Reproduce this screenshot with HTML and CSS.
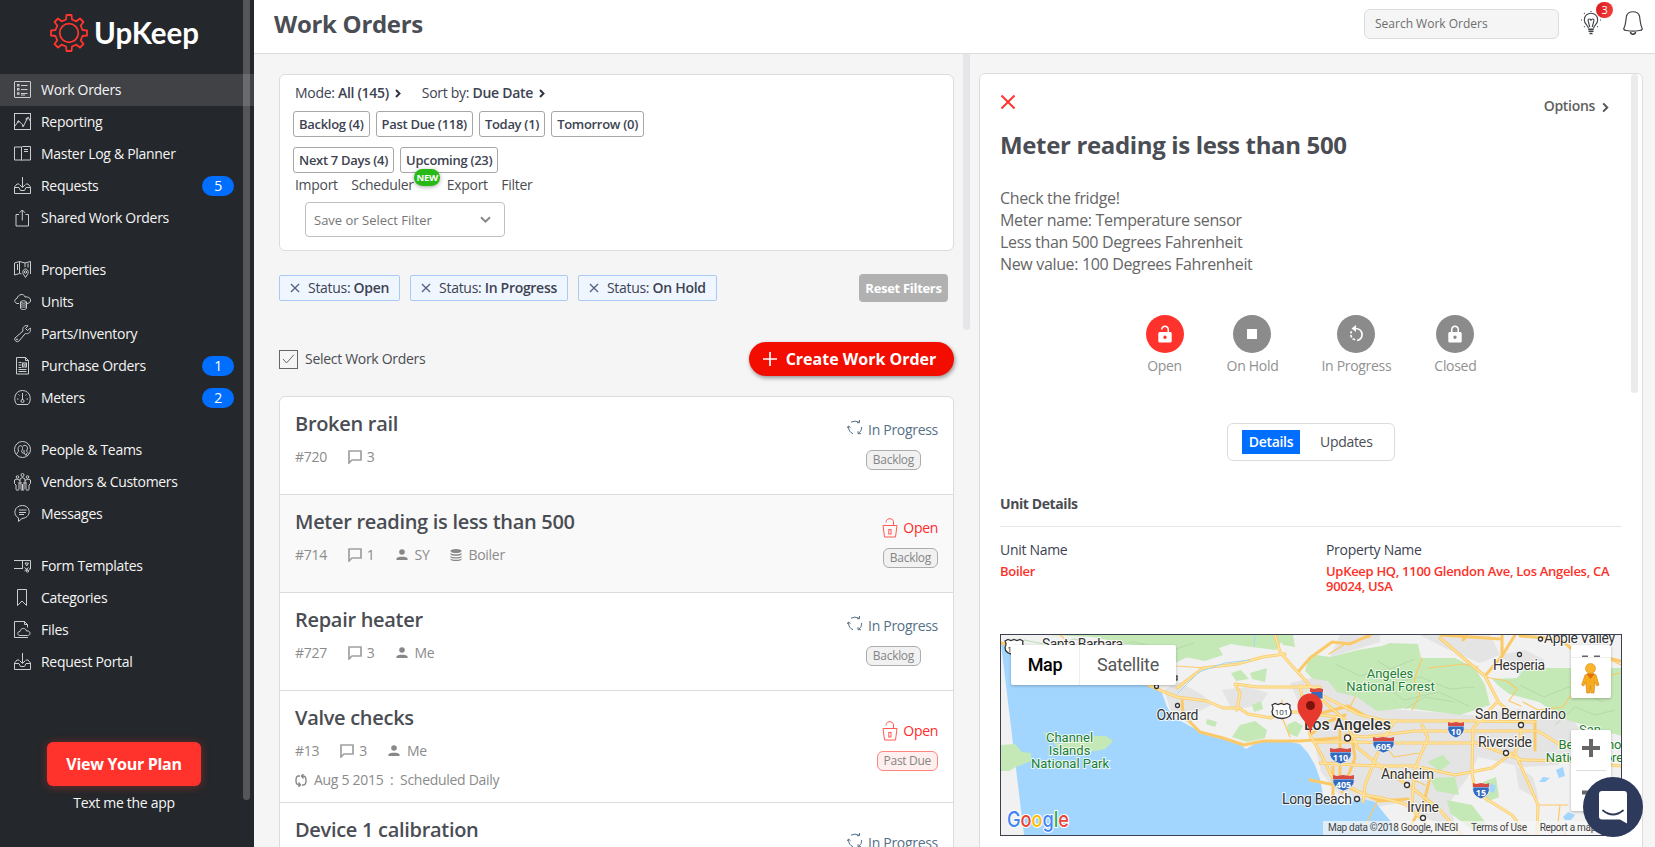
FILE: index.html
```html
<!DOCTYPE html>
<html lang="en">
<head>
<meta charset="utf-8">
<title>Work Orders - UpKeep</title>
<link rel="stylesheet" href="styles.css">
</head>
<body>
<svg class="defs" width="0" height="0">
  <symbol id="i-orders" viewBox="0 0 18 18"><rect x=".5" y=".5" width="16" height="16" rx=".5"/><path d="M7 4.500h6.500M7 8.500h6.500M7 12.500h6.500M7 14h4"/><rect x="3.500" y="3.500" width="1.500" height="1.500"/><rect x="3.500" y="7.500" width="1.500" height="1.500"/><rect x="3.500" y="11.800" width="1.500" height="1.500"/></symbol>
  <symbol id="i-report" viewBox="0 0 18 18"><rect x=".5" y=".5" width="16" height="16"/><path d="M1 13l3.500-5 3 2.500L9.500 13 14 4l2.500 4.500"/><circle cx="4.500" cy="8.500" r=".7"/><circle cx="9" cy="13" r=".7"/><circle cx="12.500" cy="6" r=".7"/></symbol>
  <symbol id="i-log" viewBox="0 0 18 18"><path d="M7.500 2H.5v13h7V2l1-.5h8v13.500H8.500L7.500 16M10 4.500h4M10 6.500h4"/></symbol>
  <symbol id="i-inbox" viewBox="0 0 18 18"><path d="M8.500 0v10M5.500 7.500l3 3 3-3M5 7H3L.5 10v6.500h16V10L14 7h-2M.5 10.500H5l1.500 3h4l1.500-3h4.500"/></symbol>
  <symbol id="i-share" viewBox="0 0 18 18"><path d="M5 5.500H2v11.500h12.500V5.500h-3M8.300 11.500V1M5.500 3.800L8.300 1l2.700 2.800"/></symbol>
  <symbol id="i-map" viewBox="0 0 18 18"><path d="M7.500 13L5.500 12.500.5 14V2l5-1.500 5.500 1.500 5.500-1.500V13M5.500.5V12M11 2v4M3.500 3v6M14 2.500v4"/><path d="M11.500 16.500l-2.500-4c-1.500-6 6.500-6 5 0z"/><circle cx="11.500" cy="11" r="1.200"/></symbol>
  <symbol id="i-cloud" viewBox="0 0 18 18"><path d="M5 10.500H3C0 9.500 0 6 3 5.500 4 1 10 0 11 4c3-.5 6 1 5.500 4-.3 1.500-2 2.500-3.500 2.500"/><ellipse cx="9.500" cy="9" rx="3" ry="1.200"/><path d="M6.500 9v6c0 2 6 2 6 0V9M6.500 11c0 1.500 6 1.500 6 0M6.500 13c0 1.500 6 1.500 6 0"/></symbol>
  <symbol id="i-wrench" viewBox="0 0 18 18"><path d="M1 13L9 6C8 2.500 10.500-.2 14 .8L11.500 3.500l2 2L16.300 3c1.200 4-2 6.500-5 5.500L5 16c-1.500 2-5.500-.5-4-3z"/><circle cx="3" cy="14.500" r=".6"/></symbol>
  <symbol id="i-doc" viewBox="0 0 18 18"><path d="M2.500.5h9l3 3v13.500h-12zM11.500.5v3h3M4.500 5.500h3M4.500 8h3M4.500 10.500h3M4.500 12.500h8M4.500 14.500h8"/><rect x="8.500" y="6" width="4" height="4"/><path d="M8.500 6l4 4M12.500 6l-4 4"/></symbol>
  <symbol id="i-meter" viewBox="0 0 18 18"><path d="M3 15.500C-1 12 0 1.500 8.500 1.500S18 12 14 15.500zM8.500 4v7M3 10h1.500M12.500 10H14M4.500 5.500l1 1M12.500 5.500l-1 1"/><circle cx="8.500" cy="12" r="1.500"/></symbol>
  <symbol id="i-people" viewBox="0 0 18 18"><circle cx="8.500" cy="8.500" r="8"/><path d="M3 13c0-2 1.500-2 1.500-3C2.500 4 9 3 8.500 7.500c0 2-1 2.500-1 3.500l2 1.500M9 5c3-2 5.500 1 4 4-1 1.500 0 2 1.500 3M10 9v3l2 2.500 1-2.500"/></symbol>
  <symbol id="i-vendors" viewBox="0 0 18 18"><circle cx="8.500" cy="2" r="1.500"/><circle cx="3.500" cy="4" r="1.300"/><circle cx="13.500" cy="4" r="1.300"/><path d="M6 11V6l2.500-1.500L11 6v5M7 16.500V9M10 16.500V9M8.500 11v6M2 16.500V12L.5 10.500V7L3 6l3 1.500M5 16.500V9M15 16.500V12l1.500-1.500V7L14 6l-3 1.500M12 16.500V9M7 17h3M2 17h3M12 17h3"/></symbol>
  <symbol id="i-message" viewBox="0 0 18 18"><path d="M4.500 16.500V13C-1.500 10 0 .5 8.500.5S18 12.500 8 13.500zM5 5h7.500M5 7.500h7M5 9.500h5"/></symbol>
  <symbol id="i-form" viewBox="0 0 18 18"><path d="M0 3.500h16.500v8.500H15M0 11.500h9M8.500 3.500v8M11 6h3.500l-1.800 3zM10.500 10.500l4 3.500M14.500 10.500l-4 3.500"/><circle cx="13.500" cy="14" r="1.200"/></symbol>
  <symbol id="i-bookmark" viewBox="0 0 18 18"><path d="M3.500.5h9v16L8 12l-4.500 4.500z"/></symbol>
  <symbol id="i-files" viewBox="0 0 18 18"><path d="M14 16.500H.5V.5h10l3 3v3M10.500.5v3h3M6 14.500c-3 0-3-4 0-4 .5-4 6-4 6.500-.5 4-1 5 4.500 1 4.500z"/></symbol>
  <symbol id="i-chat" viewBox="0 0 14 14"><path d="M1 13V1h12v9H4z" stroke-width="1.700"/></symbol>
  <symbol id="i-user" viewBox="0 0 12 12"><circle cx="6" cy="3" r="2.800"/><path d="M.5 11V9.500C.5 7 11.500 7 11.500 9.500V11z"/></symbol>
  <symbol id="i-db" viewBox="0 0 12 12"><ellipse cx="6" cy="2" rx="5.500" ry="2"/><path d="M.5 3.700c1 2 10 2 11 0v1.500c-1 2-10 2-11 0zM.5 6.700c1 2 10 2 11 0v1.200c-1 2-10 2-11 0zM.5 9.300c1 2 10 2 11 0v1.200c-1 2-10 2-11 0z"/></symbol>
  <symbol id="i-progress" viewBox="0 0 16 16"><path d="M4 2.200Q8 0 12 2.200M12.500 0v2.700H10M1.500 6.500Q1.500 12 6 13.700M0 8l1.500-2 2 1.500M14.700 7Q15 11 11.500 13.500M14 13.700h-3v-2.500"/></symbol>
  <symbol id="i-unlock" viewBox="0 0 16 20"><path d="M1 7.500h14L13.500 19h-11zM4 4.500C4-.5 11.500-.5 11.500 4v3.500"/><rect x="6.800" y="11.500" width="2.200" height="4.500"/></symbol>
  <symbol id="i-cross" viewBox="0 0 16 16"><path d="M1.500 1.500l13 13M14.500 1.500l-13 13"/></symbol>
  <symbol id="i-right" viewBox="0 0 6 9"><path d="M1 1l3.500 3.500L1 8"/></symbol>
</svg>

<aside class="sidebar">
  <svg class="logo" width="160" height="48" viewBox="0 0 160 48">
    <g transform="translate(24 24)" fill="none" stroke="#fd352d" stroke-width="1.800" stroke-linejoin="round">
      <path d="M-3-13.500L-2.500-18H2.500L3-13.500L7.400-11.700L11-14.500L14.500-11L11.700-7.400L13.500-3L18-2.500V2.500L13.500 3L11.700 7.400L14.500 11L11 14.500L7.400 11.700L3 13.500L2.500 18H-2.500L-3 13.500L-7.400 11.700L-11 14.500L-14.500 11L-11.700 7.400L-13.500 3L-18 2.500V-2.500L-13.500-3L-11.700-7.400L-14.500-11L-11-14.500L-7.400-11.700Z"/>
      <circle r="9.300"/>
    </g>
    <text class="wordmark" x="49" y="35" textLength="105" lengthAdjust="spacingAndGlyphs">UpKeep</text>
  </svg>
  <nav class="nav">
    <div class="nav-group">
      <a class="nav-item active"><svg><use href="#i-orders"/></svg>Work Orders</a>
      <a class="nav-item"><svg><use href="#i-report"/></svg>Reporting</a>
      <a class="nav-item"><svg><use href="#i-log"/></svg>Master Log &amp; Planner</a>
      <a class="nav-item"><svg><use href="#i-inbox"/></svg>Requests<span class="count">5</span></a>
      <a class="nav-item"><svg><use href="#i-share"/></svg>Shared Work Orders</a>
    </div>
    <div class="nav-group">
      <a class="nav-item"><svg><use href="#i-map"/></svg>Properties</a>
      <a class="nav-item"><svg><use href="#i-cloud"/></svg>Units</a>
      <a class="nav-item"><svg><use href="#i-wrench"/></svg>Parts/Inventory</a>
      <a class="nav-item"><svg><use href="#i-doc"/></svg>Purchase Orders<span class="count">1</span></a>
      <a class="nav-item"><svg><use href="#i-meter"/></svg>Meters<span class="count">2</span></a>
    </div>
    <div class="nav-group">
      <a class="nav-item"><svg><use href="#i-people"/></svg>People &amp; Teams</a>
      <a class="nav-item"><svg><use href="#i-vendors"/></svg>Vendors &amp; Customers</a>
      <a class="nav-item"><svg><use href="#i-message"/></svg>Messages</a>
    </div>
    <div class="nav-group">
      <a class="nav-item"><svg><use href="#i-form"/></svg>Form Templates</a>
      <a class="nav-item"><svg><use href="#i-bookmark"/></svg>Categories</a>
      <a class="nav-item"><svg><use href="#i-files"/></svg>Files</a>
      <a class="nav-item"><svg><use href="#i-inbox"/></svg>Request Portal</a>
    </div>
  </nav>
  <button class="plan">View Your Plan</button>
  <a class="text-app">Text me the app</a>
  <i class="thumb side-thumb"></i>
</aside>

<main class="main">
  <header class="topbar">
    <h1>Work Orders</h1>
    <div class="search">Search Work Orders</div>
    <div class="tips">
      <svg width="20" height="24" viewBox="0 0 20 24" fill="none" stroke="#3e4148" stroke-width="1.100"><path d="M7.500 17.500c0-3-4.200-4-4.200-8.500C3.300 0 16.700 0 16.700 9c0 4.500-4.200 5.500-4.200 8.500M8.800 16L7 9.500c0-2 2.500-2 3 0 .5-2 3-2 3 0L11.200 16M10 0v1M0 9h1M19 9h1M3 2l.7.7M17 2l-.7.7M3 16l.7-.7M17 16l-.7-.7"/><path d="M7.300 18.300h5.400M7.500 20.300h5M8.500 22.500h3" stroke-width="1.400"/></svg>
      <span class="alert">3</span>
    </div>
    <svg class="bell" width="20" height="24" viewBox="0 0 20 24" fill="none" stroke="#3e4148" stroke-width="1.200"><path d="M3.500 5C5-.7 15-.7 16.500 5c1 6 .5 8 2.800 13-.3 1-1 1.500-2.800 1.500-4 .8-9 .8-13 0C1.700 19.500 1 19 .7 18 3 13 2.500 11 3.500 5z"/><path d="M7.500 21c0 3 5 3 5 0" stroke-width="1.600"/></svg>
  </header>

  <div class="content">
    <section class="list-col">
      <div class="filters">
        <div class="modes"><span>Mode: <b>All (145)</b><svg class="caret"><use href="#i-right"/></svg></span><span>Sort by: <b>Due Date</b><svg class="caret"><use href="#i-right"/></svg></span></div>
        <div class="quick">
          <span class="pill">Backlog (4)</span><span class="pill">Past Due (118)</span><span class="pill">Today (1)</span><span class="pill">Tomorrow (0)</span>
          <span class="pill">Next 7 Days (4)</span><span class="pill">Upcoming (23)</span>
        </div>
        <div class="links"><span>Import</span><span class="scheduler">Scheduler<i class="new">NEW</i></span><span>Export</span><span>Filter</span></div>
        <div class="select">Save or Select Filter<svg width="11" height="8" viewBox="0 0 11 8"><path d="M1 1.200l4.500 4.500L10 1.200" fill="none" stroke="#888" stroke-width="2"/></svg></div>
      </div>

      <div class="chips">
        <span class="chip"><svg><use href="#i-cross"/></svg>Status: <b>Open</b></span>
        <span class="chip"><svg><use href="#i-cross"/></svg>Status: <b>In Progress</b></span>
        <span class="chip"><svg><use href="#i-cross"/></svg>Status: <b>On Hold</b></span>
        <button class="reset">Reset Filters</button>
      </div>

      <div class="actions">
        <span class="box"><svg width="13" height="10" viewBox="0 0 13 10"><path d="M1 5l3.500 4L12 .7" fill="none" stroke="#666" stroke-width="1"/></svg></span>
        <span>Select Work Orders</span>
        <button class="create"><svg width="14" height="14" viewBox="0 0 14 14"><path d="M7 0v14M0 7h14" stroke="#fff" stroke-width="1.700"/></svg>Create Work Order</button>
      </div>

      <div class="orders">
        <article class="order">
          <div><h2>Broken rail</h2>
            <div class="meta"><span>#720</span><span><svg class="c"><use href="#i-chat"/></svg>3</span></div></div>
          <div class="state"><span class="progress"><svg><use href="#i-progress"/></svg>In Progress</span><em class="tag shifted">Backlog</em></div>
        </article>
        <article class="order selected">
          <div><h2>Meter reading is less than 500</h2>
            <div class="meta"><span>#714</span><span><svg class="c"><use href="#i-chat"/></svg>1</span><span><svg class="u"><use href="#i-user"/></svg>SY</span><span><svg class="u d"><use href="#i-db"/></svg>Boiler</span></div></div>
          <div class="state"><span class="open"><svg><use href="#i-unlock"/></svg>Open</span><em class="tag">Backlog</em></div>
        </article>
        <article class="order">
          <div><h2>Repair heater</h2>
            <div class="meta"><span>#727</span><span><svg class="c"><use href="#i-chat"/></svg>3</span><span><svg class="u"><use href="#i-user"/></svg>Me</span></div></div>
          <div class="state"><span class="progress"><svg><use href="#i-progress"/></svg>In Progress</span><em class="tag shifted">Backlog</em></div>
        </article>
        <article class="order tall">
          <div><h2>Valve checks</h2>
            <div class="meta"><span>#13</span><span><svg class="c"><use href="#i-chat"/></svg>3</span><span><svg class="u"><use href="#i-user"/></svg>Me</span></div>
            <div class="repeat"><svg width="12" height="13" viewBox="0 0 12 13" fill="none" stroke="#888" stroke-width="1.400"><path d="M5 2H3.500Q1 2 1 6.500T4 11h1M3.500 8.500L5.500 11l-2 1.800M7 2h1q3 0 3 4.500T8.500 11H7M8.500 0l-2 2 2 2.500"/></svg>Aug 5 2015&nbsp; :&nbsp; Scheduled Daily</div></div>
          <div class="state"><span class="open"><svg><use href="#i-unlock"/></svg>Open</span><em class="tag due">Past Due</em></div>
        </article>
        <article class="order tall">
          <div><h2>Device 1 calibration</h2></div>
          <div class="state"><span class="progress"><svg><use href="#i-progress"/></svg>In Progress</span></div>
        </article>
      </div>
      <i class="thumb list-thumb"></i>
    </section>

    <section class="detail">
      <div class="detail-top">
        <svg class="close"><use href="#i-cross"/></svg>
        <span class="options">Options<svg><use href="#i-right"/></svg></span>
      </div>
      <h2 class="detail-title">Meter reading is less than 500</h2>
      <p class="desc">Check the fridge!<br>Meter name: Temperature sensor<br>Less than 500 Degrees Fahrenheit<br>New value: 100 Degrees Fahrenheit</p>
      <div class="statuses">
        <div><span class="dot on"><svg viewBox="0 0 14 18"><path fill-rule="evenodd" d="M2 7h7.500V4.500c0-3.500-5-3.500-5 0H3C3-1 11-1 11 4.500V7h1c1 0 1.700.5 1.700 1.500V16c0 1-.7 1.500-1.700 1.500H2C1 17.500.3 17 .3 16V8.500C.3 7.500 1 7 2 7zm5 3.500a1.700 1.700 0 100 3.400 1.700 1.700 0 000-3.400z"/></svg></span>Open</div>
        <div><span class="dot"><svg viewBox="0 0 14 18"><path d="M2 4h10v10H2z"/></svg></span>On Hold</div>
        <div><span class="dot"><svg viewBox="0 0 14 18"><path d="M6 3.500c9-.5 9 11.500 2 12" fill="none" stroke="#fff" stroke-width="1.700"/><path d="M2.500 3.500L7 0v7zM1 8.500h1.700l.5-2-1.500-.6zM1 10h1.700l.7 2-1.500 1zM3 14.200l1.200-1.200 2 .9v1.600z"/></svg></span>In Progress</div>
        <div><span class="dot"><svg viewBox="0 0 14 18"><path fill-rule="evenodd" d="M2 7h1V4.500C3-1 11-1 11 4.500V7h1c1 0 1.700.5 1.700 1.500V16c0 1-.7 1.500-1.700 1.500H2C1 17.500.3 17 .3 16V8.500C.3 7.500 1 7 2 7zm2.500 0h5V4.500c0-3.500-5-3.500-5 0zM7 10.500a1.700 1.700 0 100 3.400 1.700 1.700 0 000-3.400z"/></svg></span>Closed</div>
      </div>
      <div class="tabs"><b>Details</b><span>Updates</span></div>
      <h3>Unit Details</h3>
      <div class="fields">
        <div><label>Unit Name</label><b>Boiler</b></div>
        <div><label>Property Name</label><b>UpKeep HQ, 1100 Glendon Ave, Los Angeles, CA 90024, USA</b></div>
      </div>
      <div class="map">
        <svg class="canvas" viewBox="1001 635 620 200">
          <rect x="1001" y="635" width="620" height="200" fill="#f1f1f1"/>
          <g fill="#e4e4e4">
            <path d="M1164 690l15-8 22 12 12 10-15 8-8 12-18-10zM1222 690l26-3 20 6-8 12-28 5zM1290 683l35-8 28 17 35 17 85 6 45-6 55 10 10 16-25 30-35 2-45-10-10 20-18 25 5 25-22-6-35-18-22 4-35-10-20-25-9-40z"/>
            <path d="M1420 635h70l10 20-20 8-35-15zM1500 655l25-5 20 10-25 15zM1515 765l18 12 6 22-20-10zM1340 635h40v7l-50 15z"/>
          </g>
          <g fill="#c5e8b7">
            <path d="M1001 635h285l-10 15-33-4-12-2-12 4 4 7-18 6-30-6-22-6-60-12-92-4zM1130 646l27-1 30 12-25 13z"/>
            <path d="M1308 661l8-6 14 2 28-7 24-4 8-3 28 1 3 14h34l20 10 10 17 5 20-30 10-53-7-30 3-20-14-20-5-9-11-15-2-8-8z"/>
            <path d="M1492 679l25-1 9-10h96v68l-28-8-27-8-28-18-30-8-10-8z"/>
            <path d="M1277 635h16l2 12-12-2zM1250 673l17-5-2 14-13-3zM1231 673l10-3 8 9-13 2zM1252 705l9-4 2 8-9 3zM1207 719l10 3-2 5-9-3zM1240 725l15-4 12 9-2 8-18 4-15-5zM1287 725l8-4 8 5-6 11-9-4zM1427 762l16-7 7 8-10 8zM1430 778l25-1 4 18-23-4zM1447 800l25 5 14 18-12 8-24-18zM1483 782l13-5 3 20-13 5zM1578 760l20-4 10 6-12 5zM1400 693l20 4-7 6z"/>
          </g>
          <g fill="none" stroke="#aed7a3" stroke-width=".8">
            <path d="M1335 664l25 12 15-5 20 12 25-6 30 12 25-2M1360 690l24-6 20 16 35-8 30 14M1378 661l12 8 25-10M1405 709l20-12 30 5M1520 685l24 12 25-10 34 15M1555 725l20-18 20 8 20-5M1024 640l30 6 20-7 35 8 25-5 35 9 25-8"/>
          </g>
          <path fill="#a2d6ff" d="M1001 644l15 3 20 10 35 8 25-2 20 14 34 8 12 8 5 14 6 10 17 9 14 8 17 5 15 2 10 8 12-7 22-2 20 4 8 9 7 12 5 14 3 16 10 8 12 2 14-7 16 4 13 16 13 17h-377z"/>
          <g fill="#c5e8b7"><path d="M1001 745l14-1 7 8 9 1v8l-15 6-7 4h-8zM1042 732l10 2 6 10 18-5 11 2 5-5 14 0 7 5-8 8-10 2-18 2-20-5-4-7z"/></g>
          <g fill="#a2d6ff"><path d="M1539 782l4-5 7 1-5 4zM1556 770l7-3 2 9-6 2zM1563 817l5-5 7 3-4 5h-6zM1490 783l6 3-2 7-5-2z"/></g>
          <g fill="none" stroke="#fbc967" stroke-linejoin="round" stroke-linecap="round">
            <g stroke-width="1.200">
              <path d="M1122 652l25 10 30 4 28 2M1060 635l15 12M1370 637l-25 7-16 10M1355 697l-7 14M1422 658l-8 22 6 14-8 16M1428 668l35-4 15 3M1485 677l22 4 10 8-8 12 12 5M1523 702l15 8 25-3 8-12 30-18 20-4M1282 700v17l8 20M1580 770l10 18M1560 805l-2 18 8 12M1538 805h30M1605 657l16 8M1400 774l25 11M1386 747l8 10 25-4M1378 800l-15 30"/>
            </g>
            <g stroke-width="3">
              <path d="M1001 643l14 3M1148 685l14 6 15 6 30 4 16 7h16l9 6 23 4 7-6h20l40 5M1177 688l26-20 34-4 26-7 22-3M1237 710l3-17-5-9 22 3h63M1182 700l1 15 17 17 23 6 21 7 19-4h37l37-3M1320 688l-20-2 7 36 3 13 13 23 9 19 33 18 17 3 23 6 20 18M1275 635l5 17 13 15 12 13 15 18 25 22 13 28 24 20 30 20 26 20 24 27M1298 672l12-14 22-16 18 2 22-10M1315 692l20 10 23 12 27 7h90l60 1M1345 735l20 2 50-6h123l24 15 15 2M1315 742h43l37 1h77M1320 763l55 3 40 0 40 9 37-7 20-15M1440 638l28 24 17 14 13 25-25 27-1 44 3 20 37 23 15 20M1498 702l24 20-2 16-5 15 13 29 10 23-1 30M1473 742l49 18 46 1 54 5M1422 725l6 13-13 30-3 35M1395 720l-13 22-17 43-2 17M1352 738l3 20-13 34M1340 730v57M1485 676l17-20 13-21M1502 635v22M1441 635l60 4M1520 636l40 3 12 10 48 12M1535 720v30M1310 780l40 8 30 13 28-2M1430 778l-6 24-14 25M1463 640l4-4M1310 735l15-12 20-8M1318 714l30-8 16 9M1333 763v35"/>
            </g>
          </g>
          <g fill="none" stroke="#fee5a0" stroke-linejoin="round" stroke-linecap="round" stroke-width="1.500">
            <path d="M1148 685l14 6 15 6 30 4 16 7h16l9 6 23 4 7-6h20l40 5M1177 688l26-20 34-4 26-7 22-3M1237 710l3-17-5-9 22 3h63M1320 688l-20-2 7 36 3 13 13 23 9 19 33 18 17 3 23 6 20 18M1275 635l5 17 13 15 12 13 15 18 25 22 13 28 24 20 30 20 26 20 24 27M1315 692l20 10 23 12 27 7h90l60 1M1345 735l20 2 50-6h123l24 15 15 2M1315 742h43l37 1h77M1320 763l55 3 40 0 40 9 37-7 20-15M1440 638l28 24 17 14 13 25-25 27-1 44 3 20 37 23 15 20M1498 702l24 20-2 16-5 15 13 29 10 23-1 30M1473 742l49 18 46 1 54 5M1422 725l6 13-13 30-3 35M1395 720l-13 22-17 43-2 17"/>
          </g>
          <path d="M1177 694l22-22 26-9 25-3M1255 635l-1 11" fill="none" stroke="#a2d6ff" stroke-width="1"/>
          <g class="place">
            <text x="1042" y="649" textLength="81">Santa Barbara</text>
            <text x="1156.500" y="720" textLength="42">Oxnard</text>
            <text x="1282" y="804" textLength="70">Long Beach</text>
            <text x="1493" y="670" textLength="52">Hesperia</text>
            <text x="1544" y="643" textLength="71">Apple Valley</text>
            <text x="1475" y="719" textLength="91">San Bernardino</text>
            <text x="1478" y="747" textLength="54">Riverside</text>
            <text x="1381" y="779" textLength="53">Anaheim</text>
            <text x="1407" y="812" textLength="32">Irvine</text>
            <text class="city" x="1304" y="730" textLength="87">Los Angeles</text>
          </g>
          <g class="park">
            <text x="1069.500" y="742">Channel</text><text x="1069.500" y="755">Islands</text><text x="1070" y="768">National Park</text>
            <text x="1390" y="678">Angeles</text><text x="1390.500" y="691">National Forest</text>
            <text x="1590" y="734">San</text><text x="1590" y="749">Bernardino</text><text x="1590" y="762">National Forest</text>
          </g>
          <g fill="#fff" stroke="#333" stroke-width="1.300"><circle cx="1177.500" cy="705.500" r="2"/><circle cx="1156.500" cy="686.500" r="2"/><rect x="1174" y="676" width="3" height="4"/><circle cx="1347.500" cy="738" r="3"/><circle cx="1407" cy="785" r="2.500"/><circle cx="1357" cy="799" r="2.500"/><circle cx="1423" cy="818" r="2.500"/><circle cx="1506" cy="753" r="2.500"/><circle cx="1521" cy="725" r="2.500"/><circle cx="1519.500" cy="654.500" r="2"/><circle cx="1540.500" cy="639" r="2"/></g>
          <g>
            <g fill="#fff" stroke="#333" stroke-width="1.300"><path d="M1272 705l3-1.500 3 1 3-1 3 1 3-1 3 1.500q-1 3 1 6 1 7-9 7.500-10-.5-10-7 2-3.500 0-6.500z"/><path d="M1005 641l3-1.500 3 1 3-1 3 1 3-1 3 1.500q-1 3 1 6 1 7-9 7.500-10-.5-10-7 2-3.500 0-6.500z"/></g>
            <g fill="#356bbf" stroke="#fff" stroke-width=".7">
              <path d="M1448 726h16q2 8-8 12-10-4-8-12zM1373 741h21q2 8-10.500 12-12.500-4-10.500-12zM1330 752h21q2 8-10.500 12-12.500-4-10.500-12zM1333 779h21q2 8-10.500 12-12.500-4-10.500-12zM1473 787h16q2 8-8 12-10-4-8-12zM1311 691h12v8h-12z"/>
            </g>
            <g fill="#d84a42"><path d="M1448 722l3 1 5-1 5 1 3-1v4h-16zM1373 737l4 1 6-1 7 1 4-1v4h-21zM1330 748l4 1 6-1 7 1 4-1v4h-21zM1333 775l4 1 6-1 7 1 4-1v4h-21zM1473 783l3 1 5-1 5 1 3-1v4h-16zM1310 688l4 1 5-1 4 1v3h-13z"/></g>
            <g class="route"><text x="1456" y="735">10</text><text x="1383.500" y="750">605</text><text x="1340.500" y="761">110</text><text x="1343.500" y="788">405</text><text x="1481" y="796">15</text></g>
            <g class="route dark"><text x="1281.500" y="715">101</text><text x="1014" y="652">101</text></g>
          </g>
          <path d="M1310.500 734c-2-13-13-16-13-28a12.500 12.500 0 0125 0c0 12-10 15-12 28z" fill="#e8392f"/><circle cx="1310.500" cy="705.500" r="4.500" fill="#7c120c"/>
          <text class="google" x="1007" y="827" textLength="62" lengthAdjust="spacingAndGlyphs"><tspan fill="#4285f4">G</tspan><tspan fill="#ea4335">o</tspan><tspan fill="#fbbc05">o</tspan><tspan fill="#4285f4">g</tspan><tspan fill="#34a853">l</tspan><tspan fill="#ea4335">e</tspan></text>
        </svg>
        <div class="map-type"><b>Map</b><span>Satellite</span></div>
        <div class="pegman"><svg width="40" height="53" viewBox="0 0 40 53"><path d="M11 11.500h6M23 11.500h6" stroke="#666" stroke-width="2"/><path d="M0 12.500h40" stroke="#eee"/><path d="M14 30q6-4 11 0l3 10-2 1-2-4-1 11h-3l-.5-7-.8 7h-3l-1-11-2 4-2-1z" fill="#f9ab1e" stroke="#c98013" stroke-width=".6"/><path d="M15.500 29h8l-4 5z" fill="#e56d10"/><circle cx="19.500" cy="23.500" r="5" fill="#fbb42b" stroke="#c98013" stroke-width=".5"/></svg></div>
        <div class="zoom"><svg width="40" height="81" viewBox="0 0 40 81"><path d="M20 9v18M11 18h18M11 62.500h18" stroke="#666" stroke-width="4"/><path d="M5 40.500h30" stroke="#ddd"/></svg></div>
        <div class="credits"><span>Map data ©2018 Google, INEGI</span><span>Terms of Use</span><span>Report a map error</span></div>
      </div>
      <i class="thumb detail-thumb"></i>
    </section>
  </div>
</main>
<div class="chat"><svg width="28" height="33" viewBox="0 0 28 33"><path d="M3 0h22q3 0 3 3v29.500l-7-4H3q-3 0-3-3V3q0-3 3-3z" fill="#fff"/><path d="M4 19.500q10 8 20 0" fill="none" stroke="#2e3a5b" stroke-width="1.800" stroke-linecap="round"/></svg></div>
</body>
</html>
```
FILE: styles.css
```css
* { box-sizing: border-box; }
html, body { height: 100%; }
body { margin: 0; display: flex; overflow: hidden; background: #f5f5f5; font: 14px/20px "Open Sans", "Noto Sans", sans-serif; letter-spacing: -.3px; color: #4a4d52; }
h1, h2, h3, p { margin: 0; }
button { border: 0; font: inherit; letter-spacing: inherit; padding: 0; }
svg { letter-spacing: 0; }
.defs { position: absolute; }
.thumb { position: absolute; width: 7px; border-radius: 0 0 4px 4px; background: #e6e5e8; }
b { font-weight: 600; }

/* Sidebar */
.sidebar { position: relative; flex: none; width: 254px; height: 847px; background: #24272b; color: #f5f5f5; display: flex; flex-direction: column; align-items: center; }
.logo { align-self: flex-start; margin: 9px 0 17px 45px; flex: none; }
.wordmark { font: 700 30px Lato, sans-serif; fill: #fff; }
.nav { width: 100%; display: flex; flex-direction: column; gap: 20px; }
.nav-item { display: flex; align-items: center; height: 32px; padding: 0 20px 0 14px; }
.nav-item svg { width: 18px; height: 18px; margin-right: 9px; fill: none; stroke: #cbcdcf; stroke-width: 1; }
.nav-item.active { background: #414246; }
.count { margin-left: auto; width: 32px; height: 20px; border-radius: 10px; background: #006eff; color: #fff; line-height: 20px; text-align: center; }
.plan { width: 154px; height: 44px; margin: 64px 6px 0 0; border-radius: 6px; background: #ff322c; color: #fff; font-size: 16px; font-weight: 700; box-shadow: 0 1px 8px rgba(255, 50, 44, .4); flex: none; }
.text-app { margin: 7px 6px 0 0; }
.side-thumb { left: 243px; top: 0; height: 800px; background: rgba(255, 255, 255, .22); }

/* Header */
.main { flex: 1; min-width: 0; display: flex; flex-direction: column; }
.topbar { flex: none; height: 54px; background: #fff; border-bottom: 1px solid #dcdcdd; display: flex; align-items: flex-start; padding: 0 12px 0 20px; }
h1 { font-size: 24px; line-height: 33px; font-weight: 700; color: #4a4d53; margin: 7px auto 0 0; }
.search { width: 195px; height: 30px; margin-top: 9px; border: 1px solid #dcdcdd; border-radius: 6px; background: #f5f5f5; font-size: 12px; line-height: 28px; letter-spacing: 0; padding-left: 10px; color: #6d6d6d; }
.tips { position: relative; margin: 11px 0 0 22px; height: 24px; }
.alert { position: absolute; left: 15px; top: -9px; width: 17px; height: 16px; border-radius: 8px; background: linear-gradient(115deg, #d4151d, #f64540); color: #fff; font-size: 11px; line-height: 16px; text-align: center; }
.bell { margin: 11px 0 0 22px; }

.content { flex: 1; min-height: 0; display: flex; align-items: flex-start; overflow: hidden; }

/* List column */
.list-col { position: relative; width: 725px; height: 793px; overflow: hidden; padding: 20px 25px 0 25px; display: flex; flex-direction: column; flex: none; }
.list-thumb { left: 709px; top: 0; height: 276px; }
.filters { flex: none; height: 177px; background: #fff; border: 1px solid #dcdcdd; border-radius: 6px; padding: 8px 13px 0; }
.modes { display: flex; gap: 21px; padding-left: 2px; height: 28px; color: #3d4351; }
.caret { width: 6px; height: 9px; margin-left: 6px; fill: none; stroke: #2f3542; stroke-width: 2; }
.quick { display: flex; flex-wrap: wrap; gap: 10px 6px; width: 368px; }
.pill { height: 26px; padding: 0 5px; border: 1px solid #a7a7a7; border-radius: 3px; font-size: 13px; line-height: 25px; font-weight: 600; color: #3d4351; white-space: nowrap; }
.links { display: flex; padding: 2px 0 0 2px; gap: 13.5px; }
.scheduler { position: relative; width: 82px; }
.new { position: absolute; left: 63px; top: -6px; width: 26px; height: 17px; border-radius: 9px; background: #27ba16; color: #fff; font: 700 9.5px/17px "Open Sans", sans-serif; letter-spacing: -.2px; text-align: center; box-shadow: 0 1px 4px rgba(0, 0, 0, .35); }
.select { width: 200px; height: 35px; margin: 7px 0 0 12px; border: 1px solid #c0c0c0; border-radius: 4px; display: flex; align-items: center; justify-content: space-between; padding: 0 13px 0 8px; font-size: 13px; letter-spacing: 0; color: #767676; }
.chips { flex: none; display: flex; align-items: center; gap: 10px; height: 28px; margin-top: 23px; }
.chip { height: 26px; padding: 0 10px; border: 1px solid #a9caf3; border-radius: 2px; background: #eff6ff; color: #3d4351; line-height: 24px; white-space: nowrap; }
.chip svg { width: 10px; height: 10px; margin-right: 8px; fill: none; stroke: #525f7d; stroke-width: 2; }
.reset { margin: 0 6px 0 auto; width: 89px; height: 28px; border-radius: 4px; background: #b1b1b1; color: #fff; font-size: 13px; font-weight: 700; }
.actions { flex: none; display: flex; align-items: center; height: 34px; margin-top: 40px; }
.box { width: 19px; height: 19px; margin-right: 7px; border: 1px solid #666; display: flex; align-items: center; justify-content: center; }
.create { margin-left: auto; width: 205px; height: 34px; padding-right: 4px; border-radius: 17px; background: #f20d00; color: #fff; font-size: 16px; font-weight: 700; letter-spacing: 0; display: flex; align-items: center; justify-content: center; gap: 9px; box-shadow: 1px 2px 4px rgba(0, 0, 0, .4); }
.orders { margin-top: 20px; border: 1px solid #dcdcdd; border-radius: 6px 6px 0 0; background: #fff; }
.order { height: 98px; border-bottom: 1px solid #dcdcdd; display: flex; justify-content: space-between; padding: 13px 15px 0; }
.order.selected { background: #f9f9f9; }
.order.tall { height: 112px; }
.order h2 { font-size: 20px; line-height: 28px; font-weight: 600; color: #4a4d53; }
.meta { display: flex; gap: 21px; margin-top: 9px; color: #8b8b8b; }
.meta span { display: flex; align-items: center; }
.meta .c { width: 14px; height: 14px; margin-right: 5px; fill: none; stroke: #a0a0a0; }
.meta .u { width: 12px; height: 12px; margin-right: 7px; fill: #888; }
.meta .d { margin-right: 6px; }
.repeat { display: flex; align-items: center; gap: 7px; color: #8b8b8b; margin-top: 9px; }
.state { display: flex; flex-direction: column; align-items: flex-end; padding-top: 10px; }
.tall .state { padding-top: 17px; }
.state span { display: flex; align-items: center; height: 20px; }
.progress { color: #567186; }
.progress svg { width: 16px; height: 16px; margin: -5px 5px 0 0; fill: none; stroke: #567186; }
.open { color: #ff2b2b; }
.open svg { width: 16px; height: 20px; margin-right: 5px; fill: none; stroke: #ff5a54; }
.tag { margin-top: 10px; height: 20px; padding: 0 6px; border: 1px solid #adadad; border-radius: 6px; background: #f1f1f1; font-style: normal; font-size: 12px; line-height: 18px; color: #858585; }
.tag.shifted { margin-right: 17px; }
.tag.due { border-color: #ff8580; background: #ffefee; }

/* Detail column */
.detail { position: relative; width: 664px; height: 800px; margin-top: 19px; border: 1px solid #dcdcdd; border-radius: 6px; background: #fff; padding: 20px 20px 0; }
.detail-thumb { right: 4px; top: 0; height: 319px; background: #ebebed; border-radius: 4px; }
.detail-top { display: flex; justify-content: space-between; height: 36px; padding-right: 13px; }
.close { width: 16px; height: 16px; fill: none; stroke: #ff322c; stroke-width: 1.900; }
.options { font-weight: 600; color: #606060; padding-top: 2px; }
.options svg { width: 7px; height: 11px; margin: 0 0 -2px 7px; fill: none; stroke: #555; stroke-width: 1.700; }
.detail-title { font-size: 24px; line-height: 33px; font-weight: 700; letter-spacing: -.35px; color: #4a4d53; margin-top: -2px; }
.desc { margin-top: 26px; font-size: 16px; line-height: 22px; letter-spacing: -.34px; color: #666; }
.statuses { display: flex; justify-content: center; gap: 43px; margin: 40px 0 0 0; }
.statuses div { display: flex; flex-direction: column; align-items: center; gap: 3px; color: #919191; }
.dot { width: 38px; height: 38px; border-radius: 50%; background: #8b8b8b; display: flex; align-items: center; justify-content: center; }
.dot.on { background: #ff322c; }
.dot svg { width: 14px; height: 18px; fill: #fff; }
.tabs { width: 168px; height: 38px; margin: 47px auto 0; border: 1px solid #dcdcdd; border-radius: 6px; display: flex; align-items: center; padding-left: 14px; gap: 20px; }
.tabs b { width: 58px; height: 24px; line-height: 24px; background: #006eff; color: #fff; text-align: center; }
h3 { margin-top: 33px; padding-bottom: 12px; border-bottom: 1px solid #e3e9e9; font-size: 14px; line-height: 20px; font-weight: 700; letter-spacing: -.4px; }
.fields { display: grid; grid-template-columns: 326px 1fr; margin-top: 13px; height: 94px; color: #3d4351; }
.fields label, .fields b { display: block; }
.fields b { color: #fb3129; font-size: 13px; line-height: 15px; margin-top: 4px; }
.map { position: relative; width: 622px; height: 202px; border: 1px solid #3a4050; overflow: hidden; font-family: Roboto, sans-serif; }
.canvas { display: block; width: 620px; height: 200px; }
.place text, .park text { font: 14px Roboto, sans-serif; fill: #333; stroke: #fff; stroke-width: 2px; stroke-opacity: .8; paint-order: stroke; }
.place .city { font-size: 16px; font-weight: 500; }
.park text { fill: #1b8030; font-size: 13px; text-anchor: middle; }
.route text { font: 700 9px "Open Sans", sans-serif; fill: #fff; text-anchor: middle; }
.route.dark text { fill: #333; font-size: 8px; font-weight: 400; }
.google { font: 500 21px Inter, sans-serif; stroke: #fff; stroke-width: 2px; paint-order: stroke; }
.map-type, .pegman, .zoom { position: absolute; background: #fff; border-radius: 2px; box-shadow: 0 1px 3px rgba(0, 0, 0, .25); }
.map-type { left: 10px; top: 10px; width: 165px; height: 40px; display: flex; font-size: 18px; line-height: 40px; text-align: center; color: #565656; }
.map-type b { width: 69px; font-weight: 500; color: #000; border-right: 1px solid #eee; }
.map-type span { flex: 1; }
.pegman { left: 570px; top: 10px; width: 40px; height: 53px; }
.zoom { left: 570px; top: 95px; width: 40px; height: 81px; }
.credits { position: absolute; left: 322px; bottom: 0; width: 298px; height: 14px; padding-left: 5px; background: rgba(245, 245, 245, .75); font-size: 10px; line-height: 14px; color: #444; display: flex; gap: 13px; white-space: nowrap; }
.chat { position: fixed; left: 1583px; top: 777px; width: 60px; height: 60px; border-radius: 50%; background: #2e3a5b; display: flex; align-items: center; justify-content: center; }
```
